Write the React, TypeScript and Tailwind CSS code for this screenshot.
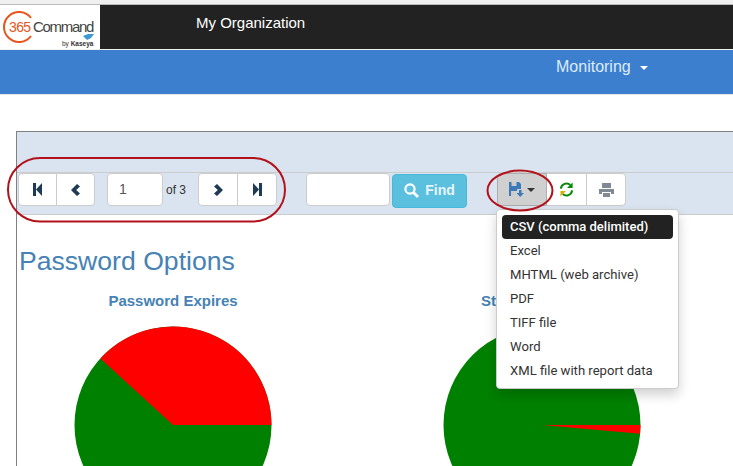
const menuItems = ["Excel", "MHTML (web archive)", "PDF", "TIFF file", "Word", "XML file with report data"];

function Logo() {
  return (
    <div className="relative h-[44px] w-[100px] shrink-0 bg-white">
      <svg className="absolute left-[3px] top-[5px]" width="32" height="34" viewBox="0 0 32 34">
        <path d="M28 8 A15 15 0 1 0 28 26" fill="none" stroke="#e8541c" strokeWidth="2" />
      </svg>
      <span className="absolute left-[9px] top-[14px] text-[14px] leading-[16px] tracking-[-0.6px] text-[#e8541c]">365</span>
      <span className="absolute left-[33px] top-[13px] text-[15px] leading-[18px] tracking-[-1.3px] text-[#444]">Command</span>
      <span className="absolute left-[62px] top-[34px] text-[6.5px] leading-[9px] text-[#333]">
        by <span className="font-bold">Kaseya</span>
      </span>
      <svg className="absolute left-[83px] top-[29px]" width="11" height="6" viewBox="0 0 11 6">
        <path d="M0 2 L5 0 L11 0 L8 4 L4 6 Z" fill="#3f97d3" />
      </svg>
    </div>
  );
}

function SaveIcon() {
  return (
    <svg width="15" height="15" viewBox="0 0 15 15">
      <path d="M0 0 H10 L12 2 V7 H8 V9 H6 V14 H0 Z" fill="#3d79b8" />
      <rect x="2.5" y="0" width="5" height="4" fill="#ccc" />
      <rect x="2" y="9" width="4" height="5" fill="#ccc" />
      <path d="M10 8 H12.5 V11 H15 L11.2 15 L7.5 11 H10 Z" fill="#3d79b8" />
    </svg>
  );
}

function RefreshIcon() {
  return (
    <svg width="15" height="15" viewBox="0 0 15 16">
      <path d="M1.5 7 A6 6 0 0 1 11.5 3.2" fill="none" stroke="#078a07" strokeWidth="2.2" />
      <path d="M14 0.5 V6.5 H8 Z" fill="#078a07" />
      <path d="M13.5 9 A6 6 0 0 1 3.5 12.8" fill="none" stroke="#078a07" strokeWidth="2.2" />
      <path d="M1 15.5 V9.5 H7 Z" fill="#d4b106" />
    </svg>
  );
}

function PrintIcon() {
  return (
    <svg width="15" height="14" viewBox="0 0 15 14" fill="#7f8a94">
      <rect x="3" y="0" width="9" height="5" />
      <path d="M0 6 H15 V11 H12 V9 H3 V11 H0 Z" />
      <rect x="4" y="10" width="7" height="4" />
    </svg>
  );
}

function StepIcon({ flip }: { flip?: boolean }) {
  return (
    <svg width="9" height="13" viewBox="0 0 9 13" fill="#1f3a55" className={flip ? "-scale-x-100" : ""}>
      <rect x="0" y="0" width="3" height="13" />
      <path d="M9 0 V13 L3 6.5 Z" />
    </svg>
  );
}

function ChevronIcon({ flip }: { flip?: boolean }) {
  return (
    <svg width="9" height="12" viewBox="0 0 9 12" fill="#1f3a55" className={flip ? "-scale-x-100" : ""}>
      <path d="M6 0 L9 2.5 L5.2 6 L9 9.5 L6 12 L0 6 Z" />
    </svg>
  );
}

function ToolButton({ children, className }: { children: React.ReactNode; className: string }) {
  return (
    <div className={`flex h-[33px] items-center justify-center border border-[#ccc] bg-white ${className}`}>
      {children}
    </div>
  );
}

function Pie({ d, className }: { d: string; className: string }) {
  return (
    <svg className={className} width="198" height="198" viewBox="-99 -99 198 198">
      <circle cx="0" cy="0" r="98.5" fill="#008000" />
      <path d={d} fill="#ff0000" />
    </svg>
  );
}

export default function App() {
  return (
    <div className="h-[466px] w-[733px] overflow-hidden bg-white font-['Liberation_Sans',sans-serif]">
      <div className="h-[4px] bg-[#f0f0f0]" />
      <div className="flex h-[46px] border-t border-b border-t-[#bbb] border-b-[#f0f0f0] bg-[#222]">
        <Logo />
        <span className="ml-[96px] mt-[9px] text-[15px] leading-[18px] text-white">My Organization</span>
      </div>
      <div className="flex h-[44px] bg-[#3c7fcf] pl-[556px] pt-[7px]">
        <span className="text-[16px] leading-[20px] text-[#dcecfa]">Monitoring</span>
        <span className="ml-[9px] mt-[9px] h-0 w-0 border-x-[4px] border-t-[4px] border-x-transparent border-t-white" />
      </div>
      <div className="h-px bg-[#e6e6e6]" />

      <div className="ml-[16px] mt-[36px] border-l border-t border-[#808080]">
        <div className="h-[40px] bg-[#dae4f0]" />
        <div className="flex h-[43px] border-t border-b border-[#ccc] bg-[#dae4f0] pl-px text-[12px] text-[#333]">
          <ToolButton className="w-[39px] rounded-l-[4px]"><StepIcon /></ToolButton>
          <ToolButton className="-ml-px w-[39px] rounded-r-[4px]"><ChevronIcon /></ToolButton>
          <div className="ml-[12px] flex h-[33px] w-[56px] items-center rounded-[4px] border border-[#ccc] bg-white pl-[11px] text-[14px] text-[#555]">1</div>
          <span className="ml-[3px] mt-[10px] w-[32px] text-[12px] leading-[14px]">of 3</span>
          <ToolButton className="w-[40px] rounded-l-[4px]"><ChevronIcon flip /></ToolButton>
          <ToolButton className="-ml-px w-[40px] rounded-r-[4px]"><StepIcon flip /></ToolButton>
          <div className="ml-[29px] h-[33px] w-[84px] rounded-[4px] border border-[#ccc] bg-white" />
          <div className="ml-[2px] mt-px flex h-[34px] w-[75px] items-center justify-center gap-[6px] rounded-[4px] border border-[#46b8da] bg-[#5bc0de] pb-[2px] text-[14px] font-bold text-[#e6f5fa]">
            <svg width="15" height="15" viewBox="0 0 15 15" fill="none" stroke="#fff" strokeWidth="2.2">
              <circle cx="6" cy="6" r="4.6" />
              <path d="M9.5 9.5 L14 14" strokeWidth="2.8" />
            </svg>
            Find
          </div>
          <div className="ml-[30px] flex h-[33px] w-[50px] items-center justify-center gap-[3px] rounded-l-[4px] border border-[#adadad] bg-[#d0d0d0]">
            <SaveIcon />
            <span className="h-0 w-0 border-x-[4px] border-t-[4px] border-x-transparent border-t-[#333]" />
          </div>
          <ToolButton className="w-[40px] border-l-0"><RefreshIcon /></ToolButton>
          <ToolButton className="-ml-px w-[40px] rounded-r-[4px]"><PrintIcon /></ToolButton>
        </div>
        <h1 className="ml-[2px] mt-[28px] text-[26.6px] leading-[36px] text-[#4682b4]">Password Options</h1>
        <div className="mt-[12px] flex">
          <div className="flex w-[312px] justify-center">
            <span className="text-[15px] font-bold leading-[20px] text-[#4682b4]">Password Expires</span>
          </div>
          <div className="ml-[152px] text-[15px] font-bold leading-[20px] text-[#4682b4]">St</div>
        </div>
        <div className="mt-[15px] flex">
          <Pie className="ml-[57px] shrink-0" d="M0 0 L98.5 0 A98.5 98.5 0 0 0 -72.6 -66.6 Z" />
          <Pie className="ml-[171px] shrink-0" d="M0 0 L98.5 0 L98.1 8.7 Z" />
        </div>
      </div>

      <div className="absolute left-[496px] top-[209px] w-[183px] rounded-[4px] border border-[#ccc] bg-white p-[5px] text-[13.1px] shadow-[0_6px_12px_rgba(0,0,0,0.18)]">
        <div className="flex h-[24px] items-center rounded-[4px] bg-[#222] pl-[8px] font-['Roboto',sans-serif] text-[13px] font-medium text-white">CSV (comma delimited)</div>
        {menuItems.map((item) => (
          <div key={item} className="flex h-[24px] items-center pl-[8px] font-['Roboto',sans-serif] text-[#333]">{item}</div>
        ))}
      </div>

      <svg className="pointer-events-none absolute left-0 top-0" width="733" height="466" fill="none" stroke="#b3111a" strokeWidth="2">
        <rect x="8" y="158" width="277" height="63.5" rx="32" />
        <ellipse cx="520" cy="190.5" rx="32.5" ry="20" />
      </svg>
    </div>
  );
}
